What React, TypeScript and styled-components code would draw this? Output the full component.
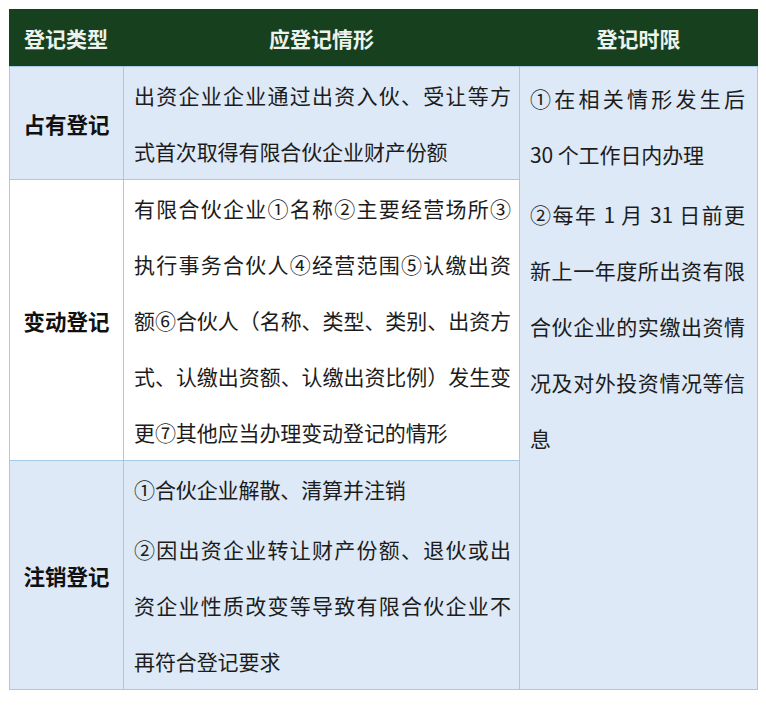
import React from 'react'
import styled, { createGlobalStyle } from 'styled-components'

const GlobalStyle = createGlobalStyle`
    html, body {
        margin: 0;
        padding: 0;
        background: #ffffff;
    }
    body {
        font-family: "Noto Sans CJK SC", "Noto Sans", sans-serif;
        color: #1c1c1c;
    }
`

const Page = styled.div`
    padding: 9px 0 0 9px;
`

const Table = styled.table`
    border-collapse: collapse;
    table-layout: fixed;
    width: 748px;
    border: 1px solid #a8c8ea;
`

const HeadCell = styled.th<{ $align?: 'left' | 'center' }>`
    height: 56px;
    padding: 0 14px;
    background: #17401f;
    color: #eef2ee;
    font-size: 21px;
    font-weight: 700;
    text-align: ${props => props.$align || 'center'};
    border: 1px solid #17401f;
    border-bottom: 1px solid #a8c8ea;
`

const TypeCell = styled.td<{ $tint?: boolean }>`
    padding: 0;
    text-align: center;
    vertical-align: middle;
    font-size: 21.5px;
    font-weight: 700;
    color: #111111;
    background: ${props => (props.$tint ? '#dde9f6' : '#ffffff')};
    border: 1px solid #a8c8ea;
`

const BodyCell = styled.td<{ $tint?: boolean }>`
    padding: 0 8px 0 10px;
    vertical-align: middle;
    background: ${props => (props.$tint ? '#dde9f6' : '#ffffff')};
    border: 1px solid #a8c8ea;
`

const LimitCell = styled.td`
    padding: 3px 12px 0 10px;
    vertical-align: top;
    background: #dde9f6;
    border: 1px solid #a8c8ea;
`

const Paragraph = styled.div<{ $gap?: number }>`
    & + & {
        margin-top: ${props => props.$gap || 0}px;
    }
`

const Line = styled.div<{ $justify?: boolean }>`
    font-size: 21px;
    line-height: 56px;
    letter-spacing: -0.1px;
    white-space: nowrap;
    text-align: ${props => (props.$justify ? 'justify' : 'left')};
    text-align-last: ${props => (props.$justify ? 'justify' : 'left')};
`

const Lines = ({ lines, gap }: { lines: string[]; gap?: number }) => (
    <Paragraph $gap={gap}>
        {lines.map((text, i) => (
            <Line key={i} $justify={i < lines.length - 1}>{text}</Line>
        ))}
    </Paragraph>
)

interface Row {
    type: string
    tint: boolean
    paragraphs: string[][]
}

const rows: Row[] = [
    {
        type: '占有登记',
        tint: true,
        paragraphs: [['出资企业企业通过出资入伙、受让等方', '式首次取得有限合伙企业财产份额']]
    },
    {
        type: '变动登记',
        tint: false,
        paragraphs: [[
            '有限合伙企业①名称②主要经营场所③',
            '执行事务合伙人④经营范围⑤认缴出资',
            '额⑥合伙人（名称、类型、类别、出资方',
            '式、认缴出资额、认缴出资比例）发生变',
            '更⑦其他应当办理变动登记的情形'
        ]]
    },
    {
        type: '注销登记',
        tint: true,
        paragraphs: [
            ['①合伙企业解散、清算并注销'],
            ['②因出资企业转让财产份额、退伙或出', '资企业性质改变等导致有限合伙企业不', '再符合登记要求']
        ]
    }
]

const limits: string[][] = [
    ['①在相关情形发生后', '30 个工作日内办理'],
    ['②每年 1 月 31 日前更', '新上一年度所出资有限', '合伙企业的实缴出资情', '况及对外投资情况等信', '息']
]

const App = () => (
    <Page>
        <GlobalStyle />
        <Table>
            <colgroup>
                <col style={{ width: 114 }} />
                <col style={{ width: 396 }} />
                <col style={{ width: 238 }} />
            </colgroup>
            <thead>
                <tr>
                    <HeadCell $align="left">登记类型</HeadCell>
                    <HeadCell>应登记情形</HeadCell>
                    <HeadCell>登记时限</HeadCell>
                </tr>
            </thead>
            <tbody>
                {rows.map((row, i) => (
                    <tr key={row.type}>
                        <TypeCell $tint={row.tint}>{row.type}</TypeCell>
                        <BodyCell $tint={row.tint}>
                            {row.paragraphs.map((p, j) => <Lines key={j} lines={p} />)}
                        </BodyCell>
                        {i === 0 && (
                            <LimitCell rowSpan={rows.length}>
                                {limits.map((p, j) => <Lines key={j} lines={p} gap={4} />)}
                            </LimitCell>
                        )}
                    </tr>
                ))}
            </tbody>
        </Table>
    </Page>
)

export default App
